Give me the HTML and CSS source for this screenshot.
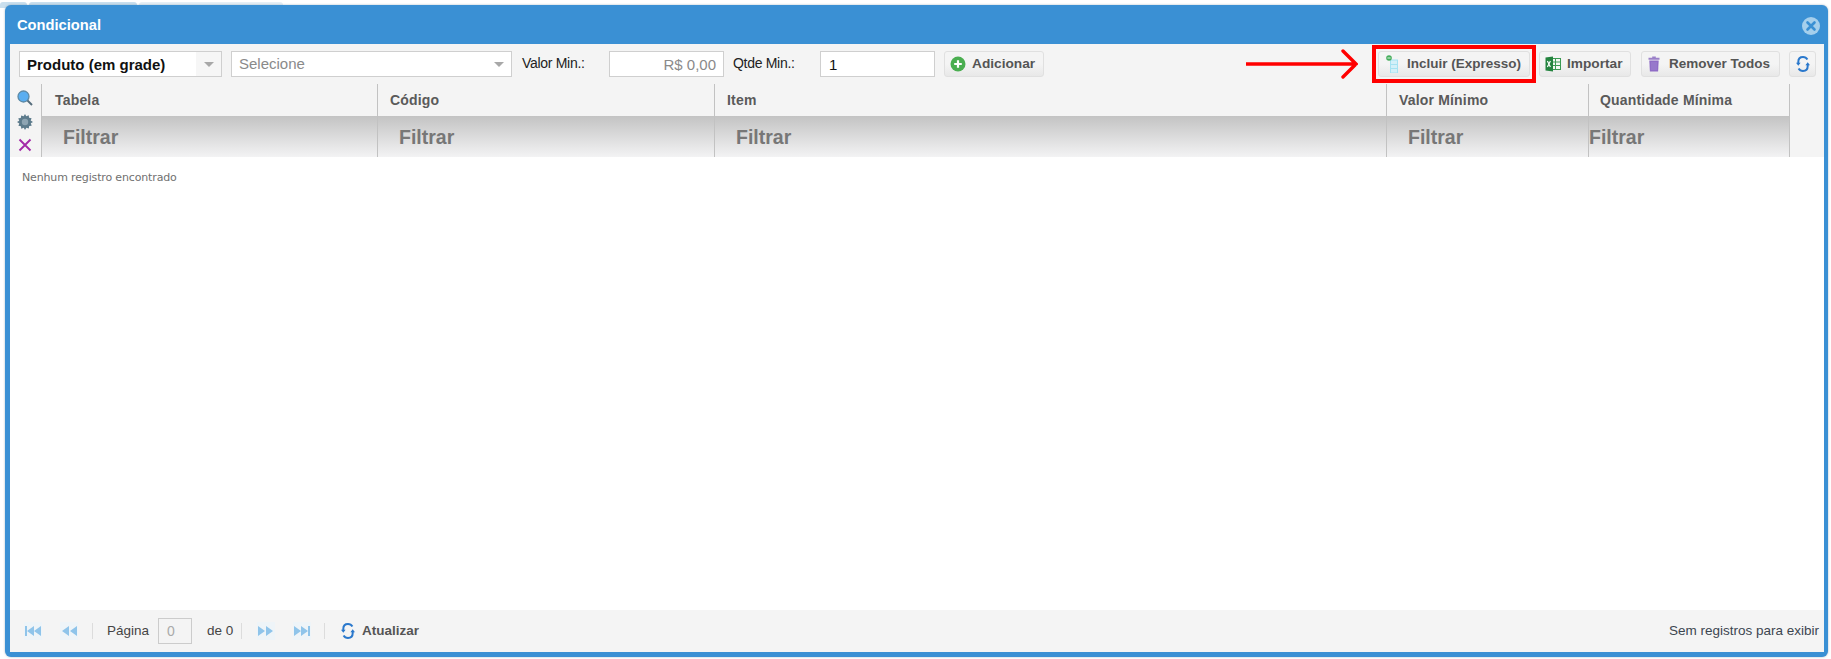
FILE: index.html
```html
<!DOCTYPE html>
<html lang="pt">
<head>
<meta charset="utf-8">
<title>Condicional</title>
<link rel="stylesheet" href="styles.css">
</head>
<body>
<div class="backdrop">
  <span class="bg-tab bg-tab-a"></span>
  <span class="bg-tab bg-tab-b"></span>
  <span class="bg-tab bg-tab-c"></span>
</div>
<main class="window">
  <header class="titlebar">
    <span class="title">Condicional</span>
    <svg class="close" viewBox="0 0 18 18" width="18" height="18"><circle cx="9" cy="9" r="9" fill="#a5cfec"/><path d="M5.500 5.500l7 7M12.500 5.500l-7 7" stroke="#3a90d4" stroke-width="2.600" stroke-linecap="round" fill="none"/></svg>
  </header>
  <div class="body">
    <div class="toolbar">
      <div class="select select-a"><span class="select-value strong">Produto (em grade)</span><span class="select-btn"><i class="caret"></i></span></div>
      <div class="select select-b"><span class="select-value muted">Selecione</span><span class="select-btn white"><i class="caret"></i></span></div>
      <label class="lbl lbl-a">Valor Min.:</label>
      <div class="field field-money">R$ 0,00</div>
      <label class="lbl lbl-b">Qtde Min.:</label>
      <div class="field field-qty">1</div>
      <button class="btn btn-add">
        <svg viewBox="0 0 16 16" width="16" height="16"><circle cx="8" cy="8" r="7.500" fill="#4aae50"/><path d="M8 4.200v7.600M4.200 8h7.600" stroke="#fff" stroke-width="2.200"/></svg>
        <span>Adicionar</span>
      </button>
      <div class="spacer"></div>
      <svg class="arrow" viewBox="0 0 112 30" width="112" height="30"><path d="M0 15H110M97 2l13 13-13 13" stroke="#f00" stroke-width="3.400" fill="none" stroke-linecap="round"/></svg>
      <div class="callout">
        <button class="btn btn-expresso">
          <svg viewBox="0 0 12 18" width="12" height="18"><rect x="4.500" y="5" width="7" height="13" fill="#d3f0f8" stroke="#a5e2f2" stroke-width="1"/><path d="M4.500 9.500h7M4.500 13.500h7" stroke="#a5e2f2" stroke-width="1"/><circle cx="3" cy="3" r="2.800" fill="#45ad5c"/><path d="M1.400 3h3.200" stroke="#dff5e4" stroke-width="1"/></svg>
          <span>Incluir (Expresso)</span>
        </button>
      </div>
      <button class="btn btn-import">
        <svg viewBox="0 0 16 16" width="16" height="16"><rect x="6" y="2.500" width="9.500" height="11" fill="#f2f8f2" stroke="#3a9a52"/><path d="M10.500 3v10M6 6h9M6 9.500h9" stroke="#3a9a52" stroke-width="1"/><path d="M0.500 1.500L8 0.500v15l-7.500-1z" fill="#24843f"/><path d="M2.400 5l3 6M5.400 5l-3 6" stroke="#fff" stroke-width="1.200"/></svg>
        <span>Importar</span>
      </button>
      <button class="btn btn-remove">
        <svg viewBox="0 0 12 16" width="12" height="16"><path d="M4.200 0.500h3.600v1.300H11.500v1.900H.5V1.800h3.700z" fill="#9a80c8"/><path d="M1.300 4.500h9.400l-.6 11H1.900z" fill="#8f6cc6"/><path d="M4 6v8M6 6v8M8 6v8" stroke="#a78fd4" stroke-width=".7"/></svg>
        <span>Remover Todos</span>
      </button>
      <button class="btn btn-sync">
        <svg viewBox="0 0 14 16" width="14" height="16"><path d="M2.300 8V6C2.300 3 4.300 1.100 7 1.100c1.900 0 3.500.9 4.400 2.500" stroke="#2a78cc" stroke-width="2" fill="none"/><path d="M11.700 8v2c0 3-2 4.900-4.700 4.900-1.900 0-3.500-.9-4.400-2.500" stroke="#2a78cc" stroke-width="2" fill="none"/><path d="M0 6.800h4.600L2.300 9.700zM9.400 9.200H14L11.700 6.300z" fill="#2a78cc"/></svg>
      </button>
    </div>

    <div class="grid">
      <div class="tools">
        <svg viewBox="0 0 16 16" width="16" height="16"><circle cx="6.500" cy="6.500" r="5.500" fill="#5aaef0" stroke="#5d8aa6" stroke-width="1.300"/><path d="M10.500 10.500L15 15" stroke="#566d7c" stroke-width="2"/></svg>
        <svg viewBox="0 0 16 16" width="16" height="16"><path d="M8 0l1.300 2.200 2.400-.9.400 2.500 2.500.4-.9 2.400L16 8l-2.200 1.300.9 2.400-2.500.4-.4 2.500-2.400-.9L8 16l-1.300-2.200-2.400.9-.4-2.500-2.500-.4.900-2.400L0 8l2.200-1.300-.9-2.400 2.500-.4.400-2.500 2.400.9z" fill="#5d7b8c"/><circle cx="8" cy="8" r="3.200" fill="#8ea5b3"/></svg>
        <svg viewBox="0 0 14 14" width="14" height="14"><path d="M1.500 1.500l11 11M12.500 1.500l-11 11" stroke="#a32aa8" stroke-width="1.900"/></svg>
      </div>
      <div class="columns">
        <div class="col col-1"><div class="col-head">Tabela</div><div class="col-filter">Filtrar</div></div>
        <div class="col col-2"><div class="col-head">Código</div><div class="col-filter">Filtrar</div></div>
        <div class="col col-3"><div class="col-head">Item</div><div class="col-filter">Filtrar</div></div>
        <div class="col col-4"><div class="col-head">Valor Mínimo</div><div class="col-filter">Filtrar</div></div>
        <div class="col col-5"><div class="col-head">Quantidade Mínima</div><div class="col-filter flush">Filtrar</div></div>
      </div>
    </div>

    <div class="results"><p class="empty">Nenhum registro encontrado</p></div>

    <footer class="pager">
      <span class="pg-btn"><svg viewBox="0 0 18 12" width="18" height="12"><path d="M1 1h2v10H1zM10 1v10L3 6zM17 1v10L10 6z"/></svg></span>
      <span class="pg-btn gap-a"><svg viewBox="0 0 18 12" width="18" height="12"><path d="M9 1v10L2 6zM17 1v10L10 6z"/></svg></span>
      <i class="sep sep-a"></i>
      <span class="pg-text pg-label">Página</span>
      <span class="pg-input">0</span>
      <span class="pg-text pg-of">de 0</span>
      <i class="sep sep-b"></i>
      <span class="pg-btn gap-b"><svg viewBox="0 0 18 12" width="18" height="12"><path d="M1 1v10L8 6zM9 1v10L16 6z"/></svg></span>
      <span class="pg-btn gap-a"><svg viewBox="0 0 18 12" width="18" height="12"><path d="M1 1v10L8 6zM8 1v10L15 6zM15 1h2v10h-2z"/></svg></span>
      <i class="sep sep-c"></i>
      <svg class="pg-sync" viewBox="0 0 14 16" width="14" height="16"><path d="M2.300 8V6C2.300 3 4.300 1.100 7 1.100c1.900 0 3.500.9 4.400 2.500" stroke="#2a78cc" stroke-width="2" fill="none"/><path d="M11.700 8v2c0 3-2 4.900-4.700 4.900-1.900 0-3.500-.9-4.400-2.500" stroke="#2a78cc" stroke-width="2" fill="none"/><path d="M0 6.800h4.600L2.300 9.700zM9.400 9.200H14L11.700 6.300z" fill="#2a78cc"/></svg>
      <span class="pg-refresh">Atualizar</span>
      <span class="pg-info">Sem registros para exibir</span>
    </footer>
  </div>
</main>
</body>
</html>
```
FILE: styles.css
```css
* { box-sizing: border-box; }
html, body { margin: 0; height: 100%; }
body { position: relative; width: 1831px; height: 659px; overflow: hidden; background: #fff; font-family: "Liberation Sans", Arial, sans-serif; color: #333; padding: 5px 3px 2px 5px; }
.backdrop { position: absolute; left: 0; top: 2px; display: flex; gap: 2px; }
.bg-tab { height: 6px; background: #c9dfee; border-radius: 3px 3px 0 0; }
.bg-tab-a { width: 27px; }
.bg-tab-b { width: 108px; }
.bg-tab-c { width: 144px; background: #e6eff6; }
.window { position: relative; height: 100%; display: flex; flex-direction: column; background: #3a90d4; border-radius: 6px; padding: 0 4px 5px 5px; box-shadow: 0 0 2px rgba(60, 100, 130, .5); }
.titlebar { height: 39px; flex: none; display: flex; align-items: center; justify-content: space-between; padding: 0 4px 0 7px; }
.title { color: #fff; font-weight: 700; font-size: 14.700px; }
.close { margin-top: 2px; }
.body { flex: 1; display: flex; flex-direction: column; background: #fff; min-height: 0; }
.toolbar { height: 40px; flex: none; display: flex; align-items: flex-start; padding: 7px 8px 0 9px; background: #f4f4f4; }
.select { height: 26px; display: flex; background: #fff; border: 1px solid #cfcfcf; font-size: 15px; }
.select-a { width: 203px; margin-right: 9px; }
.select-b { width: 281px; margin-right: 10px; }
.select-value { flex: 1; padding-left: 7px; line-height: 24px; }
.strong { font-weight: 700; color: #111; background: #fff; line-height: 26px; }
.muted { color: #8a8a8a; }
.select-btn { width: 25px; display: flex; align-items: center; justify-content: center; background: #f6f6f6; }
.select-btn.white { background: #fff; }
.caret { width: 0; height: 0; border: 5px solid transparent; border-top: 5px solid #a8a8a8; border-bottom: 0; }
.lbl { font-size: 14px; letter-spacing: -.3px; color: #222; line-height: 24px; }
.lbl-a { width: 87px; }
.lbl-b { width: 87px; }
.field { height: 26px; width: 115px; background: #fff; border: 1px solid #cfcfcf; font-size: 15px; line-height: 26px; padding: 0 7px; margin-right: 9px; }
.field-money { text-align: right; color: #8a8a8a; }
.field-qty { width: 115px; margin-right: 9px; color: #111; padding-left: 8px; }
.btn { height: 26px; display: inline-flex; align-items: center; border: 1px solid #e0e0e0; border-radius: 3px; background: linear-gradient(#f4f4f4 0, #f4f4f4 50%, #e8e8e8 100%); font-family: inherit; font-size: 13.700px; font-weight: 700; color: #555; padding: 0; }
.btn span { margin-top: -2px; }
.btn-add { width: 100px; padding-left: 5px; gap: 6px; }
.spacer { flex: 1; }
.arrow { margin-top: -2px; margin-right: 14px; }
.callout { position: relative; width: 164px; height: 38px; margin-top: -6px; margin-right: 3px; border: 4px solid #f00; padding: 2px; }
.btn-expresso { width: 152px; padding-left: 7px; gap: 9px; font-size: 13.500px; }
.btn-import { width: 92px; margin-right: 10px; padding-left: 5px; gap: 6px; }
.btn-remove { width: 139px; margin-right: 9px; padding-left: 6px; gap: 9px; font-size: 13.500px; }
.btn-sync { width: 27px; justify-content: center; }
.grid { height: 73px; flex: none; display: flex; background: #f4f4f4; }
.tools { width: 31px; flex: none; display: flex; flex-direction: column; align-items: center; gap: 8px; padding: 6px 1px 0 0; }
.columns { width: 1749px; display: flex; border-right: 1px solid #c2c2c2; }
.col { display: flex; flex-direction: column; border-left: 1px solid #c2c2c2; }
.col-1 { width: 336px; }
.col-2 { width: 337px; }
.col-3 { width: 672px; }
.col-4 { width: 202px; }
.col-5 { flex: 1; }
.col-head { height: 32px; line-height: 33px; padding-left: 12px; font-size: 14px; font-weight: 700; color: #5a5a5a; letter-spacing: .18px; }
.col-1 .col-head { padding-left: 13px; }
.col-5 .col-head { padding-left: 11px; }
.col-filter { height: 41px; background: linear-gradient(#c3c3c3, #f3f3f4); padding-left: 21px; line-height: 43px; font-size: 19.500px; font-weight: 700; color: #777; }
.col-filter.flush { padding-left: 0; }
.results { flex: 1; background: #fff; padding: 14px 12px; min-height: 0; }
.empty { margin: 0; font-family: "DejaVu Sans", sans-serif; font-size: 11px; color: #707070; letter-spacing: -.15px; }
.pager { height: 42px; flex: none; display: flex; align-items: center; background: #f4f4f4; font-size: 13.500px; color: #444; position: relative; padding-bottom: 1px; }
.pg-btn { width: 18px; height: 18px; display: flex; align-items: center; justify-content: center; background: #eef4f8; }
.pg-btn svg { fill: #8fc4ea; }
.pg-btn:first-child { margin-left: 14px; }
.gap-a { margin-left: 18px; }
.gap-b { margin-left: 15px; }
.sep { width: 1px; height: 16px; background: #dcdcdc; }
.sep-a { margin-left: 14px; }
.sep-b { margin-left: 0; }
.sep-c { margin-left: 13px; }
.pg-label { margin-left: 14px; }
.pg-input { width: 34px; height: 26px; margin-left: 9px; border: 1px solid #ccc; color: #aaa; line-height: 24px; padding-left: 8px; background: #f4f4f4; font-size: 14px; }
.pg-of { margin-left: 15px; width: 34px; }
.pg-sync { margin-left: 16px; }
.pg-refresh { margin-left: 7px; font-weight: 700; color: #555; }
.pg-info { margin-left: auto; margin-right: 5px; color: #3c4650; }
```
